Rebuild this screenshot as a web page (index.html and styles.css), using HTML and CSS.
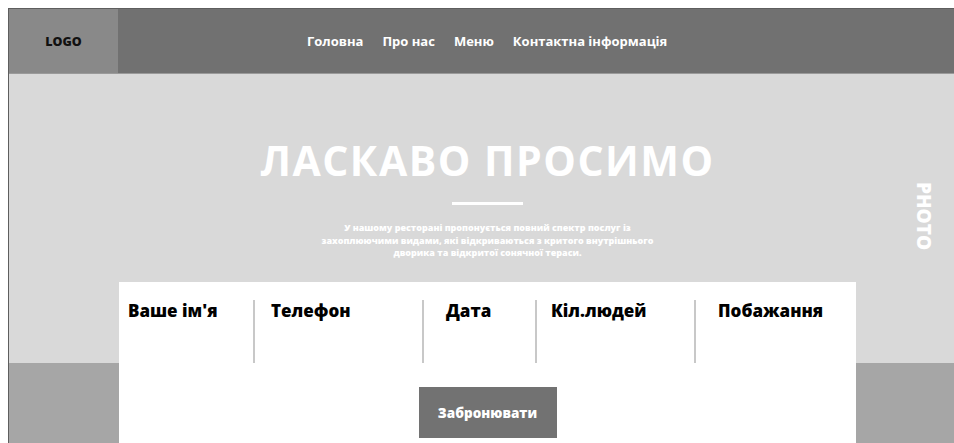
FILE: index.html
```html
<!DOCTYPE html>
<html lang="uk">
<head>
<meta charset="utf-8">
<title>Ресторан</title>
<link rel="stylesheet" href="styles.css">
</head>
<body>
<div class="page">
  <header class="topbar">
    <div class="logo">LOGO</div>
    <nav class="nav">
      <a href="#">Головна</a>
      <a href="#">Про нас</a>
      <a href="#">Меню</a>
      <a href="#">Контактна інформація</a>
    </nav>
  </header>

  <section class="hero">
    <div class="hero-inner">
      <h1 class="hero-title">ЛАСКАВО ПРОСИМО</h1>
      <div class="hero-rule"></div>
      <p class="hero-text">У нашому ресторані пропонується повний спектр послуг із захоплюючими видами, які відкриваються з критого внутрішнього дворика та відкритої сонячної тераси.</p>
    </div>
    <span class="photo-label">PHOTO</span>
  </section>

  <section class="booking">
    <form class="booking-card">
      <div class="fields">
        <div class="field field-name">Ваше ім'я</div>
        <div class="field field-phone">Телефон</div>
        <div class="field field-date">Дата</div>
        <div class="field field-guests">Кіл.людей</div>
        <div class="field field-wishes">Побажання</div>
      </div>
      <button type="button" class="book-btn">Забронювати</button>
    </form>
  </section>
</div>
</body>
</html>
```

FILE: styles.css
```css
* { box-sizing: border-box; }

html, body { background: #ffffff; }

body {
  margin: 8px 0 0 8px;
  font-family: "Open Sans", "Liberation Sans", sans-serif;
}

.page {
  border-top: 1px solid #5e5e5e;
  border-left: 1px solid #5e5e5e;
}

/* Top bar: logo block and navigation */
.topbar {
  display: flex;
  height: 65px;
  border-bottom: 1px solid #9a9a9a;
}

.logo {
  width: 109px;
  background: #898989;
  color: #111111;
  font-weight: 800;
  font-size: 12.5px;
  display: flex;
  align-items: center;
  justify-content: center;
}

.nav {
  flex: 1;
  background: #717171;
  display: flex;
  align-items: center;
  gap: 19px;
  padding-left: 189px;
}

.nav a {
  color: #ffffff;
  text-decoration: none;
  font-weight: 700;
  font-size: 13px;
}

/* Hero */
.hero {
  position: relative;
  background: #d9d9d9;
  height: 289px;
  padding-top: 62px;
}

.hero-inner {
  margin-left: 110px;
  width: 737px;
  display: flex;
  flex-direction: column;
  align-items: center;
  text-align: center;
  color: #ffffff;
}

.hero-title {
  margin: 0;
  font-size: 41px;
  line-height: 48px;
  font-weight: 700;
  letter-spacing: 1.5px;
}

.hero-rule {
  width: 71px;
  height: 3px;
  background: #ffffff;
  margin-top: 18px;
}

.hero-text {
  margin: 17px 0 0;
  width: 358px;
  font-size: 9px;
  line-height: 12.6px;
  font-weight: 800;
}

.photo-label {
  position: absolute;
  right: 17px;
  top: 108px;
  writing-mode: vertical-rl;
  color: #ffffff;
  font-weight: 800;
  font-size: 19px;
}

/* Booking band with the white card lifted over the hero */
.booking {
  display: flow-root;
  background: #a6a6a6;
  height: 80px;
}

.booking-card {
  position: relative;
  margin: -81px 0 0 110px;
  width: 737px;
  height: 161px;
  background: #ffffff;
  padding-top: 18px;
  display: flex;
  flex-direction: column;
  align-items: center;
}

.fields {
  display: grid;
  grid-template-columns: 134px 169px 113px 159px 162px;
  width: 100%;
  height: 63px;
}

.field {
  font-weight: 800;
  font-size: 17px;
  color: #000000;
  line-height: 22px;
  border-left: 2px solid #c8c8c8;
}

.field-name { border-left: 0; padding-left: 9px; }
.field-phone { padding-left: 16px; }
.field-date { padding-left: 22px; }
.field-guests { padding-left: 14px; }
.field-wishes { padding-left: 22px; }

.book-btn {
  margin-top: 24px;
  width: 138px;
  height: 51px;
  border: 0;
  background: #727272;
  color: #ffffff;
  font-family: inherit;
  font-weight: 800;
  font-size: 13.5px;
  cursor: pointer;
}
```
